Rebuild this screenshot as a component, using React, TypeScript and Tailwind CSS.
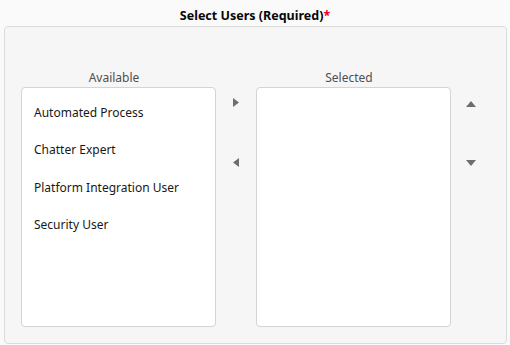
import React from "react";

const items = ["Automated Process", "Chatter Expert", "Platform Integration User", "Security User"];

function Tri({ dir }: { dir: "right" | "left" | "up" | "down" }) {
  const pts: Record<string, string> = {
    right: "0,0 6,4.5 0,9",
    left: "6,0 0,4.5 6,9",
    up: "0,6 5,0 10,6",
    down: "0,0 10,0 5,6",
  };
  const w = dir === "up" || dir === "down" ? 10 : 6;
  const h = dir === "up" || dir === "down" ? 6 : 9;
  return (
    <svg width={w} height={h} viewBox={`0 0 ${w} ${h}`} className="block">
      <polygon points={pts[dir]} fill="#706e6b" />
    </svg>
  );
}

export default function App() {
  return (
    <div
      className="w-[510px] h-[345px] bg-[#fafafa] overflow-hidden"
      style={{ fontFamily: '"Noto Sans", "Open Sans", sans-serif' }}
    >
      <div className="h-[26px] pt-[6px] text-center text-[12.5px] leading-[20px] font-bold text-[#080707]">
        Select Users (Required)<span className="text-[#ea001e]">*</span>
      </div>
      <div className="ml-[4px] w-[503px] h-[318px] border border-[#dddbda] rounded-[4px] bg-[#f6f6f6] pt-[43px] pl-[16px]">
        <div className="flex">
          <div className="flex flex-col w-[195px]">
            <div className="text-center pr-[9px] text-[12px] leading-[16px] text-[#514f4d]">Available</div>
            <div className="mt-[1px] h-[240px] bg-white border border-[#d4d4d4] rounded-[4px] py-[6px]">
              {items.map((t) => (
                <div key={t} className="h-[37.5px] flex items-center px-[12px] text-[12px] text-[#181818]">
                  {t}
                </div>
              ))}
            </div>
          </div>
          <div className="w-[40px] flex flex-col items-center pt-[28px]">
            <Tri dir="right" />
            <div className="mt-[51px]">
              <Tri dir="left" />
            </div>
          </div>
          <div className="flex flex-col w-[195px]">
            <div className="text-center pr-[9px] text-[12px] leading-[16px] text-[#514f4d]">Selected</div>
            <div className="mt-[1px] h-[240px] bg-white border border-[#d4d4d4] rounded-[4px]"></div>
          </div>
          <div className="w-[40px] flex flex-col items-center pt-[31px]">
            <Tri dir="up" />
            <div className="mt-[53px]">
              <Tri dir="down" />
            </div>
          </div>
        </div>
      </div>
    </div>
  );
}
